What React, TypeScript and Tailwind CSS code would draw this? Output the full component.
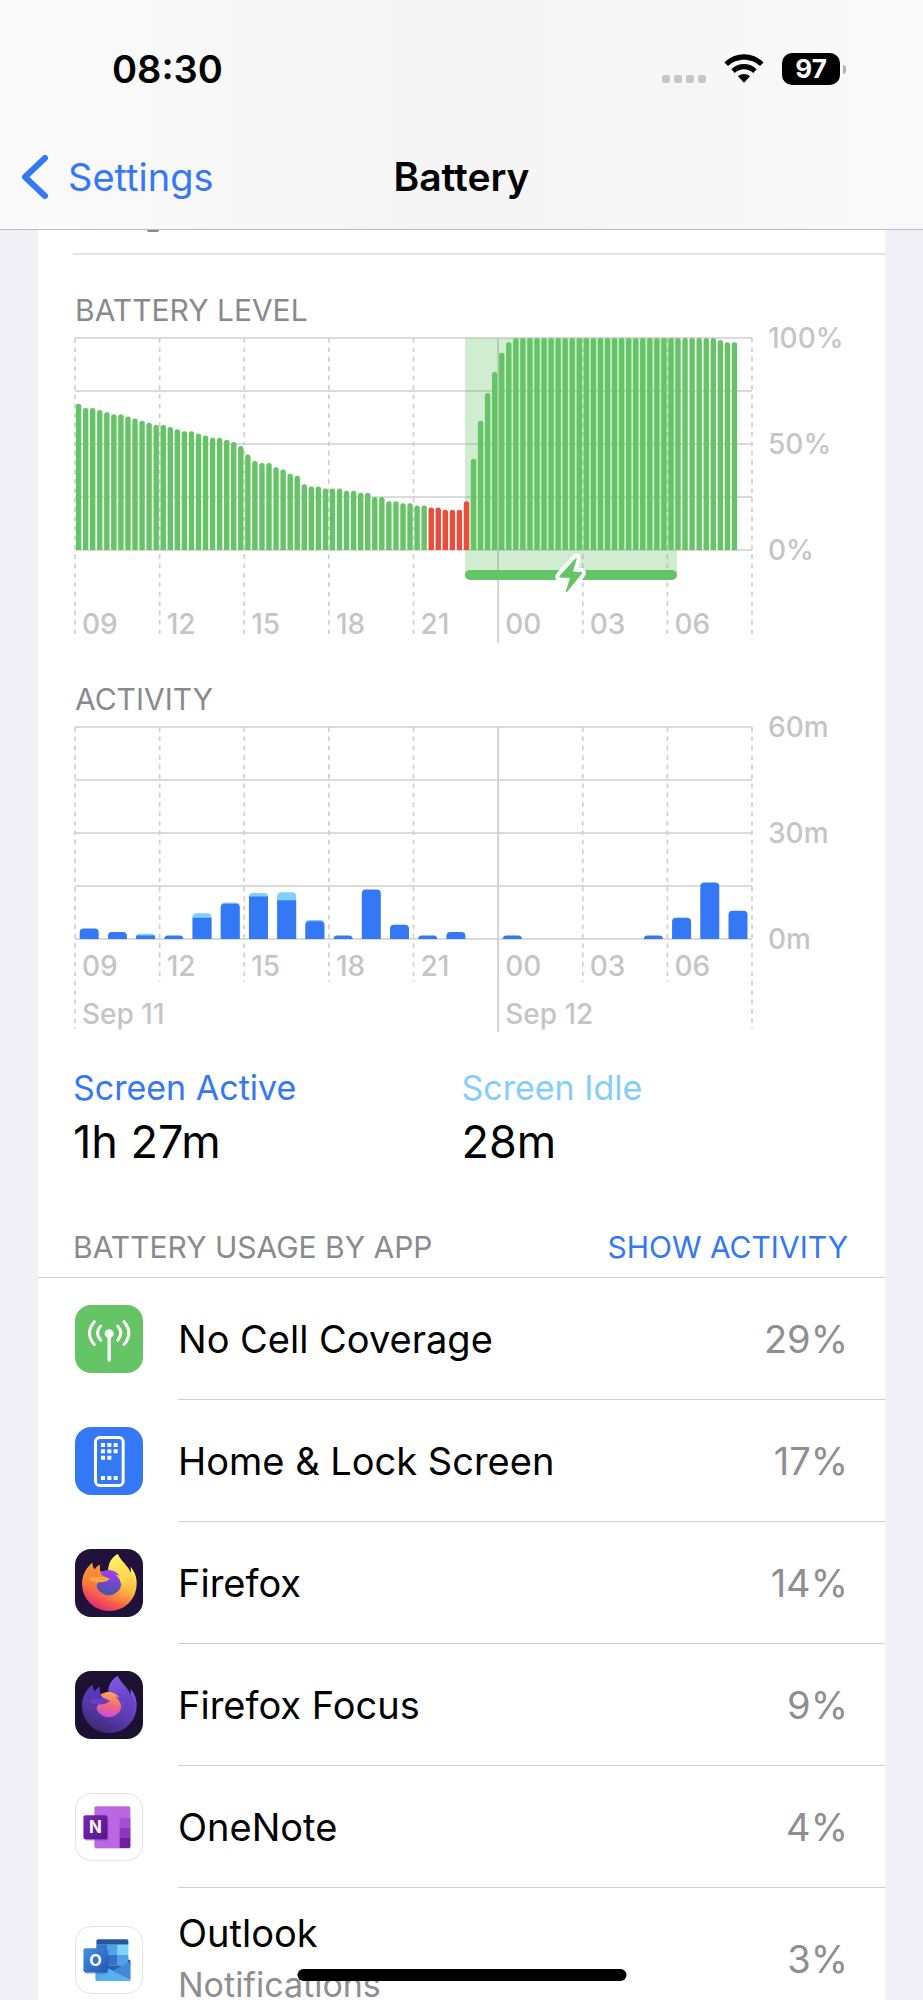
import React from 'react';

const GREEN = '#65c466';
const RED = '#eb4d3d';
const BLUE = '#3478f6';
const LIGHT_BLUE = '#83cefb';
const GRID = '#cfcfd1';

// One reading every 15 minutes, starting at 09:00
const levels: number[] = [
  69, 67, 67, 66, 65, 64, 64, 63, 62, 61, 60, 59,
  59, 58, 57, 56, 56, 55, 54, 53, 53, 52, 51, 49,
  45, 42, 41, 41, 39, 38, 36, 35, 31, 30, 30, 29,
  29, 29, 28, 28, 27, 27, 25, 25, 23, 23, 22, 22,
  21, 21, 20, 20, 19, 19, 19, 23, 43, 61, 74, 84,
  93, 98,
  ...Array(29).fill(100),
  99, 98, 98,
];

// [screen active, screen idle] minutes per hour
const activity: [number, number][] = [
  [3, 0], [2, 0], [1, 0.5], [1, 0], [6, 1.3], [10, 0.3],
  [12, 1], [11, 2.2], [5, 0.4], [1, 0], [14, 0], [4, 0],
  [1, 0], [2, 0], [0, 0], [1, 0], [0, 0], [0, 0],
  [0, 0], [0, 0], [1, 0], [6, 0], [16, 0], [8, 0],
];

const hours = ['09', '12', '15', '18', '21', '00', '03', '06'];

const LEFT = 2;
const TOP = 18;
const WIDTH = 677;
const HEIGHT = 212;
const STEP = WIDTH / 8;

function Grid({ labels, tickEnd, edgeEnd, midnightEnd }: { labels: string[]; tickEnd: number; edgeEnd: number; midnightEnd: number }) {
  return (
    <g>
      {[0, 1, 2, 3, 4].map(i => (
        <line key={i} x1={LEFT} x2={LEFT + WIDTH} y1={TOP + (i * HEIGHT) / 4} y2={TOP + (i * HEIGHT) / 4} stroke={GRID} strokeWidth="1.5" />
      ))}
      {Array.from({ length: 9 }, (_, i) => {
        const x = LEFT + i * STEP;
        if (i === 5) {
          return <line key={i} x1={x} x2={x} y1={TOP} y2={midnightEnd} stroke={GRID} strokeWidth="1.7" />;
        }
        return (
          <line key={i} x1={x} x2={x} y1={TOP} y2={i === 0 || i === 8 ? edgeEnd : tickEnd} stroke={GRID} strokeWidth="1.7" strokeDasharray="4.7 4.7" />
        );
      })}
      {labels.map((label, i) => (
        <text key={label} x="695" y={TOP + 10 + (i * HEIGHT) / 2} fill="#c5c5c7" fontSize="28" fontWeight="500">
          {label}
        </text>
      ))}
    </g>
  );
}

function HourLabels({ y }: { y: number }) {
  return (
    <g fill="#c5c5c7" fontSize="28" fontWeight="500">
      {hours.map((hour, i) => (
        <text key={hour} x={LEFT + 7 + i * STEP} y={y}>{hour}</text>
      ))}
    </g>
  );
}

function roundedBar(x: number, top: number, w: number, bottom: number, radius: number) {
  const r = Math.min(radius, bottom - top);
  return `M${x} ${bottom}V${top + r}Q${x} ${top} ${x + r} ${top}H${x + w - r}Q${x + w} ${top} ${x + w} ${top + r}V${bottom}Z`;
}

function BatteryLevelChart() {
  const slot = WIDTH / 96;
  return (
    <svg viewBox="0 0 777 324" className="block w-full" role="img" aria-label="Battery level">
      <Grid labels={['100%', '50%', '0%']} tickEnd={319} edgeEnd={319} midnightEnd={323} />
      <rect x="392" y="18" width="212" height="238" fill={GREEN} opacity="0.3" />
      {levels.map((level, i) => (
        <path
          key={i}
          d={roundedBar(LEFT + 0.9 + i * slot, TOP + HEIGHT * (1 - level / 100), 5.4, TOP + HEIGHT, 2.5)}
          fill={i >= 50 && i <= 55 ? RED : GREEN}
        />
      ))}
      <rect x="392" y="250" width="212" height="10" rx="5" fill={GREEN} />
      <path
        d="M502.500 238.500Q504 236.500 503.500 239.500L500 251.500L508 252Q510 252.500 508.500 254L494.500 271.500Q492.500 273 493 270.500L497 258L487 257.500Q485.500 257 487 255.500Z"
        fill={GREEN}
        stroke="#fff"
        strokeWidth="8"
        strokeLinejoin="round"
        paintOrder="stroke"
      />
      <HourLabels y={314} />
    </svg>
  );
}

function ActivityChart() {
  const slot = WIDTH / 24;
  const bottom = TOP + HEIGHT;
  const unit = HEIGHT / 60;
  return (
    <svg viewBox="0 0 777 324" className="block w-full" role="img" aria-label="Activity">
      <Grid labels={['60m', '30m', '0m']} tickEnd={273} edgeEnd={320} midnightEnd={323} />
      {activity.map(([active, idle], i) => {
        if (active + idle === 0) return null;
        const x = LEFT + 4.7 + i * slot;
        const split = bottom - active * unit;
        return (
          <g key={i}>
            {idle > 0 && <path d={roundedBar(x, split - idle * unit, 19, bottom, 4)} fill={LIGHT_BLUE} />}
            <path d={roundedBar(x, split, 19, bottom, idle > 0.45 ? 0 : 4)} fill={BLUE} />
          </g>
        );
      })}
      <HourLabels y={267} />
      <g fill="#c5c5c7" fontSize="28" fontWeight="500">
        <text x={LEFT + 7} y="315">Sep 11</text>
        <text x={LEFT + 7 + 5 * STEP} y="315">Sep 12</text>
      </g>
    </svg>
  );
}

function CellIcon() {
  return (
    <svg viewBox="0 0 204 204" className="size-full" fill="none" stroke="#fff" strokeWidth="9" strokeLinecap="round">
      <rect width="204" height="204" fill={GREEN} stroke="none" />
      <circle cx="102.500" cy="86" r="13.500" fill="#fff" stroke="none" />
      <path d="M102.500 90V165" strokeWidth="10" />
      <path d="M77 63Q58 84 77 106M128 63Q147 84 128 106" />
      <path d="M58 50Q29 84 58 119M147 50Q176 84 147 119" />
    </svg>
  );
}

function HomeScreenIcon() {
  const dots = [[0, 0], [1, 0], [2, 0], [0, 1], [1, 1], [2, 1], [0, 2], [1, 2]];
  return (
    <svg viewBox="0 0 204 204" className="size-full">
      <rect width="204" height="204" fill={BLUE} />
      <rect x="61.500" y="31.500" width="83" height="144" rx="13" fill="none" stroke="#fff" strokeWidth="9" />
      {dots.map(([c, r]) => (
        <rect key={`${c}-${r}`} x={78 + c * 19} y={48 + r * 19} width="12" height="12" rx="1" fill="#fff" />
      ))}
      {[0, 1, 2].map(c => (
        <rect key={c} x={78 + c * 19} y="147" width="12" height="12" rx="1" fill="#fff" />
      ))}
    </svg>
  );
}

interface FoxColors {
  id: string;
  bg: string;
  body: string[];
  orb: string[];
  head: string[];
  mane: string[];
}

function FoxIcon({ id, bg, body, orb, head, mane }: FoxColors) {
  return (
    <svg viewBox="0 0 204 204" className="size-full">
      <defs>
        <linearGradient id={`${id}-body`} x1="0.75" y1="0.1" x2="0.3" y2="1">
          <stop offset="0.1" stopColor={body[0]} />
          <stop offset="0.45" stopColor={body[1]} />
          <stop offset="0.75" stopColor={body[2]} />
          <stop offset="1" stopColor={body[3]} />
        </linearGradient>
        <linearGradient id={`${id}-orb`} x1="0.6" y1="0" x2="0.4" y2="1">
          <stop offset="0" stopColor={orb[0]} />
          <stop offset="0.5" stopColor={orb[1]} />
          <stop offset="1" stopColor={orb[2]} />
        </linearGradient>
        <linearGradient id={`${id}-head`} x1="0.3" y1="0" x2="0.4" y2="1">
          <stop offset="0" stopColor={head[0]} />
          <stop offset="1" stopColor={head[1]} />
        </linearGradient>
        <linearGradient id={`${id}-mane`} x1="0.4" y1="0" x2="0.6" y2="1">
          <stop offset="0" stopColor={mane[0]} />
          <stop offset="0.5" stopColor={mane[1]} />
          <stop offset="1" stopColor={mane[2]} stopOpacity="0" />
        </linearGradient>
      </defs>
      <rect width="204" height="204" fill={bg} />
      <path
        d="M52 42C31 58 21 82 21 106A82 80 0 0 0 185 106C186 84 178 65 166 53C168 60 168 66 167 71C158 50 139 38 128 15C110 26 100 42 100 66L76 68C74 62 74 55 74 48C68 51 63 56 59 62C54 57 52 50 52 42Z"
        fill={`url(#${id}-body)`}
      />
      <path
        d="M128 15C110 26 100 42 100 66C122 68 142 80 146 104C150 138 118 152 92 150C124 172 176 150 180 104C180 88 174 78 167 71C158 50 139 38 128 15Z"
        fill={`url(#${id}-mane)`}
      />
      <circle cx="101" cy="101" r="38" fill={`url(#${id}-orb)`} />
      <path d="M118 64C130 69 136 76 139 83C133 79 127 78 121 77C131 84 137 94 138 104L150 100C150 80 138 64 118 64Z" fill={mane[1]} />
      <path
        d="M52 42C36 56 29 74 26 98C36 118 48 122 62 116C65 110 67 105 71 100C82 101 98 97 104 90C97 85 90 83 84 80C80 76 76 72 75 66C73 60 74 55 74 48C68 51 63 56 59 62C54 57 52 50 52 42Z"
        fill={`url(#${id}-head)`}
      />
      <path d="M42 89C52 80 66 86 80 83C90 83 98 86 104 90C98 97 84 100 71 99C60 101 46 97 42 89Z" fill={head[2]} />
    </svg>
  );
}

function FirefoxIcon() {
  return (
    <FoxIcon
      id="firefox"
      bg="#20123a"
      body={['#fff36b', '#fdb53a', '#f8604a', '#e3257c']}
      orb={['#a43df0', '#6f48cf', '#4457a5']}
      head={['#fb9a35', '#f8733f', '#fba83c']}
      mane={['#fff36b', '#fdd84f', '#fa9a42']}
    />
  );
}

function FocusIcon() {
  return (
    <FoxIcon
      id="focus"
      bg="#1c1133"
      body={['#8154e8', '#6240bf', '#4c3399', '#3d2c6e']}
      orb={['#fdaa52', '#f4687a', '#c84ce0']}
      head={['#5d38bd', '#5236a3', '#6a3fc8']}
      mane={['#8259e6', '#6b43c8', '#50379c']}
    />
  );
}

function OneNoteIcon() {
  return (
    <svg viewBox="0 0 204 204" className="size-full">
      <defs>
        <linearGradient id="note-badge" x1="0" y1="0" x2="1" y2="1">
          <stop offset="0" stopColor="#7b27b3" />
          <stop offset="1" stopColor="#541690" />
        </linearGradient>
      </defs>
      <rect x="58" y="41" width="109" height="129" rx="5" fill="#d8d0dd" />
      <rect x="57" y="38" width="111" height="129" rx="5" fill="#bb67e2" />
      <path d="M135 74H168V105H135Z" fill="#a350d0" />
      <path d="M135 105H168V136H135Z" fill="#8a38ba" />
      <path d="M135 136H168V162Q168 167 163 167H135Z" fill="#6f20a2" />
      <rect x="27" y="70" width="73" height="74" rx="6" fill="#7b2fa8" opacity="0.5" />
      <rect x="23" y="66" width="74" height="74" rx="6" fill="url(#note-badge)" />
      <text x="60" y="121" fill="#fff" fontSize="52" fontWeight="700" textAnchor="middle">N</text>
    </svg>
  );
}

function OutlookIcon() {
  return (
    <svg viewBox="0 0 204 204" className="size-full">
      <defs>
        <linearGradient id="look-badge" x1="0" y1="0" x2="1" y2="1">
          <stop offset="0" stopColor="#4590e0" />
          <stop offset="1" stopColor="#2157b8" />
        </linearGradient>
        <linearGradient id="look-mail" x1="0" y1="0" x2="1" y2="1">
          <stop offset="0" stopColor="#4fa0e2" />
          <stop offset="1" stopColor="#5bb3f0" />
        </linearGradient>
      </defs>
      <path d="M155 96L168 104V120H155Z" fill="#12304f" />
      <path d="M63 43Q63 38 68 38H157Q162 38 162 43V55H63Z" fill="#2457a0" />
      <path d="M63 55H96V86H63Z" fill="#3173cd" />
      <path d="M96 55H129V86H96Z" fill="#52a3e6" />
      <path d="M129 55H162V86H129Z" fill="#7cd5fc" />
      <path d="M63 86H96V119H63Z" fill="#2b60b6" />
      <path d="M96 86H129V119H96Z" fill="#3072ca" />
      <path d="M129 86H162V119H129Z" fill="#50a0e4" />
      <path d="M168 106V162Q168 167 163 167H65Q60 167 60 162V119H145Z" fill="url(#look-mail)" />
      <path d="M63 119H145L114 136L90 124Z" fill="#2a5fae" />
      <path d="M100 128L168 162Q168 167 163 167H65Z" fill="#58b1ec" />
      <path d="M168 106V162L114 136Z" fill="#4189d6" />
      <rect x="27" y="70" width="73" height="74" rx="6" fill="#1d4a94" opacity="0.5" />
      <rect x="23" y="66" width="74" height="74" rx="6" fill="url(#look-badge)" />
      <text x="60" y="121" fill="#fff" fontSize="50" fontWeight="700" textAnchor="middle">O</text>
    </svg>
  );
}

interface AppUsage {
  name: string;
  detail?: string;
  percent: number;
  icon: React.ReactNode;
  outlined?: boolean;
}

const apps: AppUsage[] = [
  { name: 'No Cell Coverage', percent: 29, icon: <CellIcon /> },
  { name: 'Home & Lock Screen', percent: 17, icon: <HomeScreenIcon /> },
  { name: 'Firefox', percent: 14, icon: <FirefoxIcon /> },
  { name: 'Firefox Focus', percent: 9, icon: <FocusIcon /> },
  { name: 'OneNote', percent: 4, icon: <OneNoteIcon />, outlined: true },
  { name: 'Outlook', detail: 'Notifications', percent: 3, icon: <OutlookIcon />, outlined: true },
];

function StatusBar() {
  return (
    <div className="flex h-[138px] items-center justify-between pr-[77px] pl-28">
      <span className="text-[38px] leading-none font-semibold">08:30</span>
      <div className="flex items-center gap-[18px]">
        <div className="flex gap-1 pt-5">
          {[0, 1, 2, 3].map(i => (
            <span key={i} className="size-2 rounded-[2px] bg-[#c7c7c7]" />
          ))}
        </div>
        <svg width="40" height="30" viewBox="0 0 40 30" aria-hidden="true">
          <path d="M0.500 8.500C11 -2.500 29 -2.500 39.500 8.500L36 12C27.500 3.500 12.500 3.500 4 12Z" />
          <path d="M7.300 15.300C14 8.300 26 8.300 32.700 15.300L29.200 18.900C24 14 16 14 10.800 18.900Z" />
          <path d="M14 22.200C17.300 19.200 22.700 19.200 26 22.200L20 28.800Z" />
        </svg>
        <div className="flex items-center gap-[3px]">
          <span className="flex h-8 w-[58px] items-center justify-center rounded-[10px] bg-black text-[26px] leading-none font-bold text-white">97</span>
          <span className="h-[9px] w-[3px] rounded-r-full bg-[#b5b5b5]" />
        </div>
      </div>
    </div>
  );
}

export default function App() {
  return (
    <div className="relative flex h-screen flex-col overflow-hidden bg-[#f1f0f6] font-[Inter,sans-serif] text-black">
      <header className="shrink-0 border-b border-[#bdbdc1] bg-linear-to-r from-[#fafafa] via-[#f5f5f5] to-[#f9f9f9]">
        <StatusBar />
        <div className="grid h-[91px] grid-cols-3 items-center pr-5 pb-[14px] pl-5">
          <a href="#settings" className="flex items-center gap-[18px] text-[#3478f6]">
            <svg width="30" height="46" viewBox="0 0 30 46" fill="none" stroke="currentColor" strokeWidth="6" strokeLinecap="round" strokeLinejoin="round" aria-hidden="true">
              <path d="M25 4L5 23L25 42" />
            </svg>
            <span className="text-[38px] leading-none">Settings</span>
          </a>
          <h1 className="text-center text-[39px] leading-none font-semibold">Battery</h1>
        </div>
      </header>

      <main className="mx-[38px] min-h-0 flex-1 overflow-hidden bg-white">
        {/* Bottom edge of the row scrolled under the navigation bar */}
        <div className="ml-[35px] h-[25px] border-b-2 border-[#e3e3e5]">
          <div className="ml-[74px] h-[2px] w-3 rounded-b-full bg-[#8a8a8e]" />
        </div>

        <section className="px-[35px] pt-[38px]">
          <h2 className="pl-[2px] text-[30px] leading-[35px] text-[#8a8a8e]">BATTERY LEVEL</h2>
          <div className="-mt-2">
            <BatteryLevelChart />
          </div>
        </section>

        <section className="px-[35px] pt-[38px]">
          <h2 className="pl-[2px] text-[30px] leading-[35px] text-[#8a8a8e]">ACTIVITY</h2>
          <div className="-mt-2">
            <ActivityChart />
          </div>
        </section>

        <dl className="grid grid-cols-2 px-[35px] pt-[31px]">
          <div>
            <dt className="text-[34px] leading-[48px] text-[#3478f6]">Screen Active</dt>
            <dd className="text-[45px] leading-[60px]">1h 27m</dd>
          </div>
          <div>
            <dt className="text-[34px] leading-[48px] text-[#83cefb]">Screen Idle</dt>
            <dd className="text-[45px] leading-[60px]">28m</dd>
          </div>
        </dl>

        <section className="pt-[57px]">
          <div className="flex items-center justify-between border-b border-[#d0d0d3] pr-[37px] pb-3 pl-[35px]">
            <h2 className="text-[30px] leading-9 text-[#8a8a8e]">BATTERY USAGE BY APP</h2>
            <button type="button" className="text-[30px] leading-9 text-[#3478f6]">SHOW ACTIVITY</button>
          </div>
          <ul>
            {apps.map(app => (
              <li key={app.name} className="flex items-stretch pl-[37px]">
                <div className="flex shrink-0 items-center">
                  <div className={`size-[68px] overflow-hidden rounded-2xl ${app.outlined ? 'border border-[#e4e4e6]' : ''}`}>{app.icon}</div>
                </div>
                <div className="ml-[35px] flex min-h-[122px] flex-1 items-center justify-between border-b border-[#d0d0d3] pr-[37px]">
                  <div className={app.detail ? 'py-[19px]' : ''}>
                    <p className="text-[38px] leading-[52px]">{app.name}</p>
                    {app.detail && <p className="text-[34px] leading-[52px] text-[#8e8e93]">{app.detail}</p>}
                  </div>
                  <span className="text-[38px] leading-[52px] text-[#8e8e93]">{app.percent}%</span>
                </div>
              </li>
            ))}
          </ul>
        </section>
      </main>

      {/* Home indicator */}
      <div className="absolute bottom-[19px] left-1/2 h-3 w-[329px] -translate-x-1/2 rounded-full bg-black" />
    </div>
  );
}
